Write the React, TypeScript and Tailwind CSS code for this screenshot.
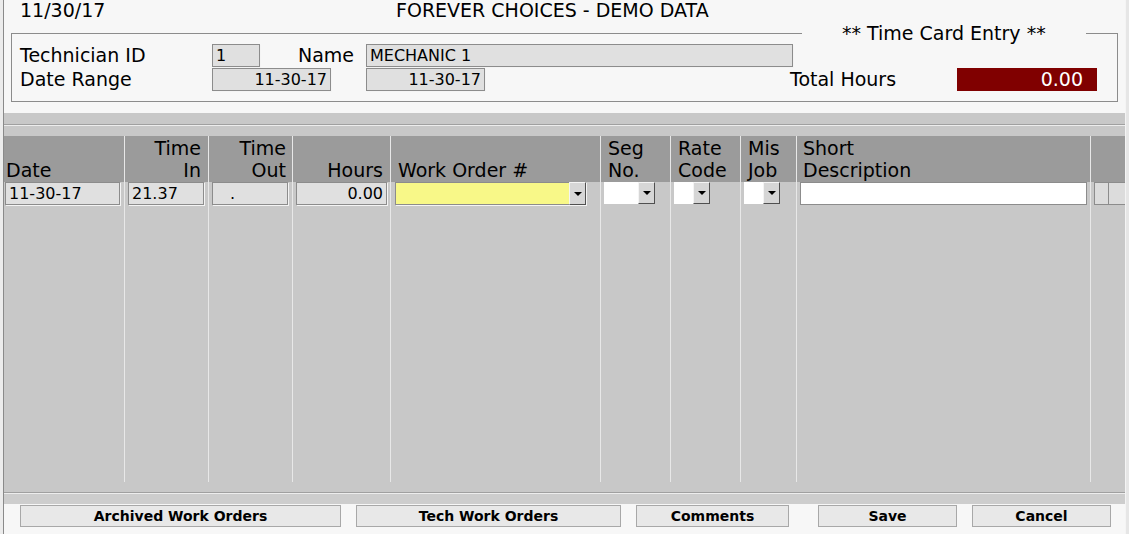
import React from 'react';

type Col = {
	key: string;
	width: string;
	head: React.ReactNode;
	headClass: string;
	cell: React.ReactNode;
};

function DropButton() {
	return (
		<div className="flex h-full w-[17px] shrink-0 items-center justify-center border border-t-[#f4f4f4] border-l-[#f4f4f4] border-b-[#505050] border-r-[#505050] bg-[#d6d6d6]">
			<svg width="8" height="4" viewBox="0 0 8 4">
				<path d="M0 0h8L4 4z" fill="#000" />
			</svg>
		</div>
	);
}

const greyInput =
	'h-[23px] border border-[#8c8c8c] bg-[#e0e0e0] text-[16px] leading-[21px] text-black shadow-[1px_1px_0_#f4f4f4]';

const columns: Col[] = [
	{
		key: 'date',
		width: 'w-[120px]',
		head: 'Date',
		headClass: 'pl-[2px] text-left',
		cell: <div className={`${greyInput} ml-px w-[115px] pl-[3px]`}>11-30-17</div>,
	},
	{
		key: 'in',
		width: 'w-[84px]',
		head: (
			<>
				Time
				<br />
				In
			</>
		),
		headClass: 'pr-[7px] text-right',
		cell: <div className={`${greyInput} ml-[3px] w-[76px] pl-[3px]`}>21.37</div>,
	},
	{
		key: 'out',
		width: 'w-[84px]',
		head: (
			<>
				Time
				<br />
				Out
			</>
		),
		headClass: 'pr-[6px] text-right',
		cell: <div className={`${greyInput} ml-[3px] w-[76px] pl-[17px]`}>.</div>,
	},
	{
		key: 'hours',
		width: 'w-[98px]',
		head: 'Hours',
		headClass: 'pr-[7px] text-right',
		cell: <div className={`${greyInput} ml-[3px] w-[91px] pr-[3px] text-right`}>0.00</div>,
	},
	{
		key: 'wo',
		width: 'w-[210px]',
		head: 'Work Order #',
		headClass: 'pl-[7px] text-left',
		cell: (
			<div className="ml-[4px] flex h-[23px] w-[191px] shadow-[1px_1px_0_#f4f4f4]">
				<div className="h-full flex-1 border border-r-0 border-[#8c8c8c] bg-[#f8f888]" />
				<DropButton />
			</div>
		),
	},
	{
		key: 'seg',
		width: 'w-[70px]',
		head: (
			<>
				Seg
				<br />
				No.
			</>
		),
		headClass: 'pl-[7px] text-left',
		cell: (
			<div className="ml-[3px] flex h-[22px] w-[51px]">
				<div className="h-full flex-1 bg-white" />
				<DropButton />
			</div>
		),
	},
	{
		key: 'rate',
		width: 'w-[70px]',
		head: (
			<>
				Rate
				<br />
				Code
			</>
		),
		headClass: 'pl-[7px] text-left',
		cell: (
			<div className="ml-[3px] flex h-[22px] w-[36px]">
				<div className="h-full flex-1 bg-white" />
				<DropButton />
			</div>
		),
	},
	{
		key: 'mis',
		width: 'w-[56px]',
		head: (
			<>
				Mis
				<br />
				Job
			</>
		),
		headClass: 'pl-[7px] text-left',
		cell: (
			<div className="ml-[3px] flex h-[22px] w-[36px]">
				<div className="h-full flex-1 bg-white" />
				<DropButton />
			</div>
		),
	},
	{
		key: 'desc',
		width: 'w-[294px]',
		head: (
			<>
				Short
				<br />
				Description
			</>
		),
		headClass: 'pl-[6px] text-left',
		cell: <div className="ml-[3px] h-[23px] w-[287px] border border-[#8c8c8c] bg-white" />,
	},
	{
		key: 'extra',
		width: 'w-[35px]',
		head: '',
		headClass: '',
		cell: (
			<div className="ml-[3px] flex h-[23px]">
				<div className="h-full w-[15px] border border-[#8c8c8c] bg-[#dcdcdc]" />
				<div className="h-full flex-1 border-y border-[#8c8c8c] bg-[#dcdcdc]" />
			</div>
		),
	},
];

const buttons = [
	{ label: 'Archived Work Orders', cls: 'ml-[16px] w-[321px]' },
	{ label: 'Tech Work Orders', cls: 'ml-[15px] w-[265px]' },
	{ label: 'Comments', cls: 'ml-[15px] w-[153px]' },
	{ label: 'Save', cls: 'ml-[29px] w-[139px]' },
	{ label: 'Cancel', cls: 'ml-[15px] w-[139px]' },
];

export default function App() {
	return (
		<div className="flex h-[534px] w-[1129px] overflow-hidden bg-[#f7f7f7] font-['DejaVu_Sans',sans-serif] text-black">
			<div className="w-[3px] shrink-0 bg-[#ececec]" />
			<div className="w-px shrink-0 bg-[#8a8a8a]" />

			<div className="flex w-[1121px] shrink-0 flex-col">
				{/* title + group box */}
				<div className="h-[113px] shrink-0">
					<div className="flex h-[24px] text-[19px] leading-[21px]">
						<div className="w-[392px] pl-[16px]">11/30/17</div>
						<div>FOREVER CHOICES - DEMO DATA</div>
					</div>
					<div className="relative ml-[7px] mt-[9px] h-[69px] w-[1107px] border border-[#8c8c8c]">
						<span className="absolute left-[790px] top-[-12px] bg-[#f7f7f7] px-[40px] text-[19px] leading-[22px]">
							** Time Card Entry **
						</span>
						<div className="flex pl-[8px] pt-[10px] text-[19px] leading-[23px]">
							<div className="w-[192px]">Technician ID</div>
							<div className={`${greyInput} w-[48px] pl-[3px]`}>1</div>
							<div className="w-[106px] pr-[12px] text-right">Name</div>
							<div className={`${greyInput} w-[427px] pl-[3px]`}>MECHANIC 1</div>
						</div>
						<div className="flex pl-[8px] pt-px text-[19px] leading-[23px]">
							<div className="w-[192px]">Date Range</div>
							<div className={`${greyInput} w-[119px] pr-[3px] text-right`}>11-30-17</div>
							<div className="w-[35px]" />
							<div className={`${greyInput} w-[119px] pr-[3px] text-right`}>11-30-17</div>
							<div className="ml-[305px] w-[167px]">Total Hours</div>
							<div className="h-[23px] w-[140px] bg-[#800000] pr-[14px] text-right text-white">0.00</div>
						</div>
					</div>
				</div>

				{/* etched band */}
				<div className="h-[11px] shrink-0 bg-[#c8c8c8]" />
				<div className="h-px shrink-0 bg-[#a0a0a0]" />
				<div className="h-px shrink-0 bg-[#ededed]" />
				<div className="h-[10px] shrink-0 bg-[#c8c8c8]" />

				{/* grid */}
				<div className="flex h-[346px] shrink-0">
					{columns.map((c, i) => (
						<div
							key={c.key}
							className={`${c.width} flex shrink-0 flex-col ${i > 0 ? 'border-l border-[#e8e8e8]' : ''}`}
						>
							<div
								className={`flex h-[46px] flex-col justify-end bg-[#9b9b9b] pb-px text-[19px] leading-[22px] ${c.headClass}`}
							>
								<div>{c.head}</div>
							</div>
							<div className="flex-1 bg-[#c8c8c8]">{c.cell}</div>
						</div>
					))}
				</div>

				<div className="h-[10px] shrink-0 bg-[#c8c8c8]" />
				<div className="h-px shrink-0 bg-[#a0a0a0]" />
				<div className="h-px shrink-0 bg-[#ededed]" />
				<div className="h-[10px] shrink-0 bg-[#cdcdcd]" />

				{/* buttons */}
				<div className="flex pt-px">
					{buttons.map((b) => (
						<div
							key={b.label}
							className={`${b.cls} flex h-[22px] shrink-0 items-center justify-center border border-[#a8a8a8] bg-[#e8e8e8] text-[14px] font-bold leading-none`}
						>
							{b.label}
						</div>
					))}
				</div>
			</div>

			<div className="w-px shrink-0 bg-[#f4f4f4]" />
			<div className="flex-1 bg-[#e6e6e6]" />
		</div>
	);
}
